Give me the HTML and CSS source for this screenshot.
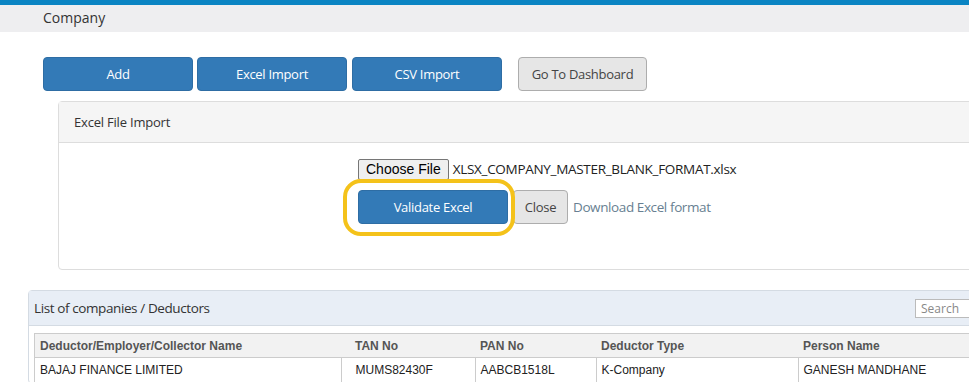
FILE: index.html
```html
<!DOCTYPE html>
<html lang="en">
<head>
    <meta charset="UTF-8">
    <meta name="viewport" content="width=device-width, initial-scale=1.0">
    <title>Company</title>
    <link rel="stylesheet" href="styles.css">
</head>
<body>
    <div class="topbar"></div>
    <div class="titlebar">Company</div>

    <div class="content">
        <div class="actions">
            <button class="btn btn-primary wide">Add</button>
            <button class="btn btn-primary wide">Excel Import</button>
            <button class="btn btn-primary wide csv">CSV Import</button>
            <button class="btn btn-default dash">Go To Dashboard</button>
        </div>

        <div class="panel import-panel">
            <div class="panel-heading">Excel File Import</div>
            <div class="panel-body">
                <div class="file-row">
                    <span class="file-btn">Choose File</span>
                    <span class="file-name">XLSX_COMPANY_MASTER_BLANK_FORMAT.xlsx</span>
                </div>
                <div class="validate-row">
                    <span class="highlight"></span>
                    <button class="btn btn-primary validate">Validate Excel</button>
                    <button class="btn btn-default close">Close</button>
                    <a class="download" href="#">Download Excel format</a>
                </div>
            </div>
        </div>

        <div class="panel list-panel">
            <div class="list-heading">
                <span>List of companies / Deductors</span>
                <input class="search" type="text" placeholder="Search">
            </div>
            <div class="list-body">
                <table class="grid">
                    <thead>
                        <tr>
                            <th class="c1">Deductor/Employer/Collector Name</th>
                            <th class="c2">TAN No</th>
                            <th class="c3">PAN No</th>
                            <th class="c4">Deductor Type</th>
                            <th class="c5">Person Name</th>
                        </tr>
                    </thead>
                    <tbody>
                        <tr>
                            <td>BAJAJ FINANCE LIMITED</td>
                            <td class="c2">MUMS82430F</td>
                            <td>AABCB1518L</td>
                            <td>K-Company</td>
                            <td>GANESH MANDHANE</td>
                        </tr>
                    </tbody>
                </table>
            </div>
        </div>
    </div>
</body>
</html>
```

FILE: styles.css
```css
body {
    margin: 0;
    font-family: "Open Sans", "Noto Sans", sans-serif;
    font-size: 14px;
    color: #333;
    background: #fff;
    overflow: hidden;
    width: 969px;
    height: 382px;
}

.topbar {
    height: 5px;
    background: #0a84c3;
}

.titlebar {
    height: 27px;
    line-height: 26px;
    padding-left: 43px;
    background: #eeeef0;
    color: #333;
}

.content {
    padding-top: 25px;
}

.actions {
    display: flex;
    padding-left: 43px;
    gap: 4px;
}

.btn {
    font-family: "Open Sans", "Noto Sans", sans-serif;
    font-size: 13px;
    letter-spacing: -0.3px;
    white-space: nowrap;
    height: 34px;
    border-radius: 4px;
    padding: 0 6px;
    cursor: pointer;
}

.btn-primary {
    background: #337ab7;
    border: 1px solid #2e6da4;
    color: #fff;
}

.btn-default {
    background: #e6e6e6;
    border: 1px solid #adadad;
    color: #444;
}

.wide {
    width: 150px;
}

.csv {
    margin-left: 1px;
}

.dash {
    width: 129px;
    margin-left: 12px;
}

.panel {
    border: 1px solid #ddd;
    border-radius: 4px;
    background: #fff;
}

.import-panel {
    margin: 10px 0 0 58px;
    width: 960px;
}

.panel-heading {
    height: 40px;
    line-height: 40px;
    padding-left: 15px;
    background: #f5f5f5;
    border-bottom: 1px solid #ddd;
    font-size: 13px;
    letter-spacing: -0.2px;
}

.panel-body {
    padding: 15px 0 45px 299px;
}

.file-row {
    display: flex;
    align-items: center;
    height: 22px;
}

.file-btn {
    font-family: "Liberation Sans", Arial, sans-serif;
    font-size: 14px;
    color: #000;
    background: #efefef;
    border: 1px solid #767676;
    border-radius: 2px;
    height: 19px;
    line-height: 19px;
    padding: 0 7px;
}

.file-name {
    margin-left: 4px;
    font-size: 13.5px;
    letter-spacing: -0.3px;
    color: #222;
}

.validate-row {
    position: relative;
    display: flex;
    align-items: center;
    margin-top: 10px;
}

.validate {
    width: 150px;
}

.close {
    width: 55px;
    margin-left: 5px;
    padding: 0;
}

.download {
    margin-left: 5px;
    color: #687f92;
    text-decoration: none;
    font-size: 13.5px;
    letter-spacing: -0.4px;
}

.highlight {
    position: absolute;
    left: -15px;
    top: -11px;
    width: 164px;
    height: 49px;
    border: 4px solid #f4c21a;
    border-radius: 18px;
}

.list-panel {
    margin: 20px 0 0 28px;
    width: 980px;
    border-color: #d4dbe3;
}

.list-heading {
    display: flex;
    align-items: center;
    justify-content: space-between;
    height: 34px;
    padding-left: 5px;
    background: #e8eef6;
    border-bottom: 1px solid #d4dbe3;
    font-size: 13.5px;
    letter-spacing: -0.4px;
}

.search {
    width: 80px;
    height: 17px;
    padding: 0 5px;
    border: 1px solid #bbb;
    font-family: "Open Sans", "Noto Sans", sans-serif;
    font-size: 12px;
    margin-right: 2px;
}

.search::placeholder {
    color: #888;
}

.list-body {
    padding: 7px 0 0 5px;
}

.grid {
    border-collapse: collapse;
    width: 1000px;
    font-family: "Liberation Sans", Arial, sans-serif;
    font-size: 12px;
    border: 1px solid #ccc;
}

.grid th {
    text-align: left;
    font-weight: bold;
    color: #555;
    background: #f2f2f2;
    height: 23px;
    padding: 0 5px;
    border-bottom: 1px solid #ccc;
}

.grid td {
    height: 24px;
    padding: 0 5px;
    color: #222;
    border-right: 1px solid #ccc;
    border-bottom: 1px solid #ccc;
}

.grid .c2 {
    padding-left: 14px;
}

.c1 { width: 296px; }
.c2 { width: 114px; }
.c3 { width: 111px; }
.c4 { width: 192px; }
```
